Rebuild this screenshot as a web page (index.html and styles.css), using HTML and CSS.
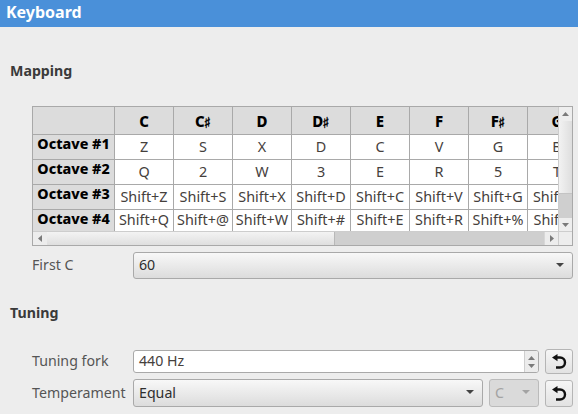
FILE: index.html
```html
<!DOCTYPE html>
<html lang="en">
<head>
<meta charset="utf-8">
<title>Keyboard</title>
<link rel="stylesheet" href="styles.css">
</head>
<body>
<header class="titlebar">Keyboard</header>
<main class="content">
  <h2 class="section mapping">Mapping</h2>
  <div class="indent">
    <div class="table-frame">
      <div class="viewport">
        <div class="grid">
          <div class="corner"></div>
          <div class="colhead">C</div><div class="colhead">C<span class="sharp">♯</span></div><div class="colhead">D</div><div class="colhead">D<span class="sharp">♯</span></div><div class="colhead">E</div><div class="colhead">F</div><div class="colhead">F<span class="sharp">♯</span></div><div class="colhead">G</div>
          <div class="rowhead">Octave #1</div>
          <div class="cell">Z</div><div class="cell">S</div><div class="cell">X</div><div class="cell">D</div><div class="cell">C</div><div class="cell">V</div><div class="cell">G</div><div class="cell">B</div>
          <div class="rowhead">Octave #2</div>
          <div class="cell">Q</div><div class="cell">2</div><div class="cell">W</div><div class="cell">3</div><div class="cell">E</div><div class="cell">R</div><div class="cell">5</div><div class="cell">T</div>
          <div class="rowhead">Octave #3</div>
          <div class="cell">Shift+Z</div><div class="cell">Shift+S</div><div class="cell">Shift+X</div><div class="cell">Shift+D</div><div class="cell">Shift+C</div><div class="cell">Shift+V</div><div class="cell">Shift+G</div><div class="cell">Shift+B</div>
          <div class="rowhead">Octave #4</div>
          <div class="cell">Shift+Q</div><div class="cell">Shift+@</div><div class="cell">Shift+W</div><div class="cell">Shift+#</div><div class="cell">Shift+E</div><div class="cell">Shift+R</div><div class="cell">Shift+%</div><div class="cell">Shift+T</div>
        </div>
      </div>
      <div class="vscroll">
        <div class="sb-btn-v"><svg width="7" height="4" viewBox="0 0 9 5" preserveAspectRatio="none"><path d="M4.500 0 9 5H0z"/></svg></div>
        <div class="vthumb"></div>
        <div class="vtrough"></div>
        <div class="sb-btn-v down"><svg width="7" height="4" viewBox="0 0 9 5" preserveAspectRatio="none"><path d="M0 0h9L4.500 5z"/></svg></div>
      </div>
      <div class="hscroll">
        <div class="sb-btn-h"><svg width="4" height="7" viewBox="0 0 5 9" preserveAspectRatio="none"><path d="M5 0v9L0 4.500z"/></svg></div>
        <div class="hthumb"></div>
        <div class="htrough"></div>
        <div class="sb-btn-h right"><svg width="4" height="7" viewBox="0 0 5 9" preserveAspectRatio="none"><path d="M0 0l5 4.500L0 9z"/></svg></div>
      </div>
      <div class="sb-corner"></div>
    </div>
    <div class="row first-c">
      <span class="label">First C</span>
      <div class="combo grow"><span>60</span><svg class="arrow" width="8" height="4" viewBox="0 0 9 5" preserveAspectRatio="none"><path d="M0 0h9L4.500 5z"/></svg></div>
    </div>
  </div>
  <h2 class="section tuning">Tuning</h2>
  <div class="indent">
    <div class="row fork">
      <span class="label">Tuning fork</span>
      <div class="spin grow">
        <span class="spin-text">440 Hz</span>
        <div class="spin-btns">
          <svg width="7" height="4" viewBox="0 0 9 5" preserveAspectRatio="none"><path d="M4.500 0 9 5H0z"/></svg>
          <svg width="7" height="4" viewBox="0 0 9 5" preserveAspectRatio="none"><path d="M0 0h9L4.500 5z"/></svg>
        </div>
      </div>
      <button class="reset" type="button" aria-label="Reset"><svg width="16" height="16" viewBox="0 0 16 16"><path class="undo" d="M4.500 3.500H9a5 5 0 0 1 0 10H5"/><path d="M6.500 0v7.200L1 3.600z"/></svg></button>
    </div>
    <div class="row temperament">
      <span class="label">Temperament</span>
      <div class="combo grow"><span>Equal</span><svg class="arrow" width="8" height="4" viewBox="0 0 9 5" preserveAspectRatio="none"><path d="M0 0h9L4.500 5z"/></svg></div>
      <div class="combo disabled"><span>C</span><svg class="arrow" width="8" height="4" viewBox="0 0 9 5" preserveAspectRatio="none"><path d="M0 0h9L4.500 5z"/></svg></div>
      <button class="reset low" type="button" aria-label="Reset"><svg width="16" height="16" viewBox="0 0 16 16"><path class="undo" d="M4.500 3.500H9a5 5 0 0 1 0 10H5"/><path d="M6.500 0v7.200L1 3.600z"/></svg></button>
    </div>
  </div>
</main>
</body>
</html>
```
FILE: styles.css
```css
* { box-sizing: border-box; }
html, body { margin: 0; padding: 0; }
body {
  width: 578px;
  height: 414px;
  overflow: hidden;
  background: #ededed;
  font-family: "Noto Sans", "DejaVu Sans", sans-serif;
  font-size: 14.2px;
  color: #3c3c3c;
}
.titlebar {
  height: 27px;
  background: #4a90d9;
  color: #fff;
  font-weight: 700;
  font-size: 16px;
  line-height: 25px;
  padding-left: 6px;
}
.content { padding-left: 10px; }
.section {
  margin: 0;
  font-size: 14.2px;
  font-weight: 700;
  line-height: 18px;
  color: #3a3a3a;
}
.mapping { padding-top: 35px; height: 79px; }
.tuning { margin-top: 25px; height: 45px; }
.indent { padding-left: 22px; width: 563px; }
.table-frame {
  width: 541px;
  height: 140px;
  border: 1px solid #a9a9a9;
  display: grid;
  grid-template-columns: 525px 14px;
  grid-template-rows: 124px 14px;
  background: #fff;
}
.viewport { overflow: hidden; }
.grid {
  display: grid;
  grid-template-columns: 82px repeat(8, 59px);
  grid-template-rows: 28px 25px 25px 25px 21px;
  width: 554px;
}
.corner, .colhead, .rowhead { background: #dcdcdc; }
.corner, .colhead, .rowhead, .cell {
  border-right: 1px solid #a9a9a9;
  border-bottom: 1px solid #a9a9a9;
  white-space: nowrap;
}
.colhead {
  display: flex;
  align-items: center;
  justify-content: center;
  color: #000;
  font-weight: 800;
  font-size: 15px;
}
.sharp {
  font-family: "DejaVu Sans", sans-serif;
  font-size: 15px;
  margin-top: 4px;
  margin-left: -1px;
  -webkit-text-stroke: 0.4px #000;
}
.rowhead {
  color: #000;
  font-weight: 800;
  font-size: 14.3px;
  line-height: 18px;
  text-align: center;
}
.cell {
  display: flex;
  align-items: center;
  justify-content: center;
  overflow: hidden;
  font-size: 14.4px;
  padding-bottom: 2px;
  color: #45403c;
}
.grid > :nth-last-child(-n+9) { border-bottom: 0; }
.vscroll {
  display: flex;
  flex-direction: column;
  border-left: 1px solid #cdcdcd;
  background: #ececec;
}
.sb-btn-v {
  height: 14px;
  display: flex;
  align-items: center;
  justify-content: center;
  background: #eeeeee;
  flex: none;
}
.sb-btn-v.down { height: 13px; }
svg path { fill: #7a7a7a; }
.vthumb { height: 73px; background: linear-gradient(to right, #f2f2f2, #dedede); border-bottom: 1px solid #c4c4c4; flex: none; }
.vtrough { flex: 1; background: #cfcfcf; }
.hscroll {
  display: flex;
  border-top: 1px solid #cdcdcd;
}
.sb-btn-h {
  width: 14px;
  display: flex;
  align-items: center;
  justify-content: center;
  background: #ededed;
  flex: none;
}
.sb-btn-h.right { border-left: 1px solid #d8d8d8; }
.hthumb { width: 288px; background: linear-gradient(#f3f3f3, #dfdfdf); border-right: 1px solid #b8b8b8; flex: none; }
.htrough { flex: 1; background: #cfcfcf; }
.sb-corner { background: #ededed; border-left: 1px solid #cdcdcd; border-top: 1px solid #cdcdcd; }
.row { display: flex; align-items: stretch; }
.first-c { margin-top: 6px; height: 27px; }
.fork { height: 25px; }
.temperament { margin-top: 5px; height: 28px; }
.label { width: 101px; flex: none; display: flex; align-items: center; padding-bottom: 2px; color: #555; }
.grow { flex: 1; min-width: 0; }
.combo {
  display: flex;
  align-items: center;
  justify-content: space-between;
  border: 1px solid #a9a9a9;
  border-radius: 3px;
  padding: 0 8px 2px 5px;
  background: linear-gradient(#f8f8f8, #dcdcdc);
  color: #2e2e2e;
}
.combo .arrow path { fill: #444; }
.combo.disabled {
  width: 50px;
  flex: none;
  margin-left: 6px;
  background: #dadada;
  border-color: #bbb;
  color: #a3a3a3;
}
.combo.disabled .arrow path { fill: #a3a3a3; }
.spin {
  display: flex;
  align-items: center;
  justify-content: space-between;
  margin: 1px 0;
  border: 1px solid #a9a9a9;
  border-radius: 3px;
  background: #fff;
  padding-left: 5px;
  color: #45403c;
}
.spin-text { margin-bottom: 2px; }
.spin-btns {
  align-self: stretch;
  width: 14px;
  display: flex;
  flex-direction: column;
  align-items: center;
  justify-content: center;
  gap: 4px;
  border-left: 1px solid #cfcfcf;
  background: #ececec;
  border-radius: 0 2px 2px 0;
}
.reset {
  width: 28px;
  flex: none;
  margin-left: 6px;
  padding: 0;
  display: flex;
  align-items: center;
  justify-content: center;
  border: 1px solid #b5b5b5;
  border-radius: 3px;
  background: linear-gradient(#f6f6f6, #e2e2e2);
}
.reset.low { margin-top: 1px; }
.reset svg path { fill: #111; }
.reset svg path.undo { fill: none; stroke: #111; stroke-width: 2.400; }
```
